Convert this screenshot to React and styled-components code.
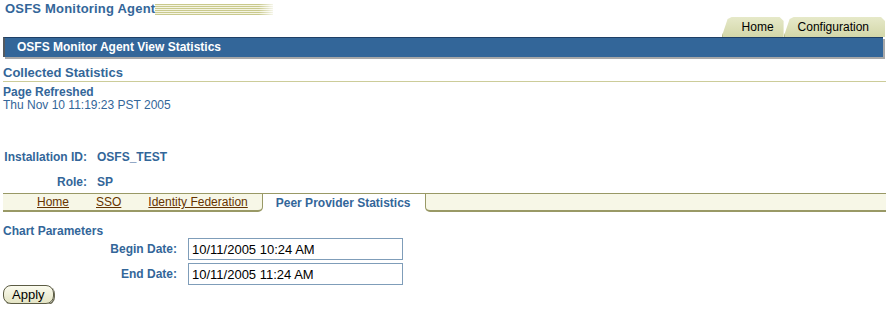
import * as React from "react";
import styled, { createGlobalStyle } from "styled-components";

const GlobalStyle = createGlobalStyle`
  body {
    margin: 0;
    background: #ffffff;
    font-family: "Liberation Sans", Arial, sans-serif;
    font-size: 12px;
  }
`;

const Page = styled.div`
  width: 886px;
  color: #336699;
`;

const Branding = styled.div`
  display: flex;
  align-items: flex-start;
  height: 17px;
  padding-left: 5px;
`;

const AppTitle = styled.h1`
  margin: 0;
  font-size: 13px;
  line-height: 17px;
  letter-spacing: 0.2px;
  font-weight: bold;
  color: #336699;
`;

const Stripes = styled.div`
  width: 118px;
  height: 11px;
  margin-top: 4px;
  background: repeating-linear-gradient(
    to bottom,
    #c9c98d 0,
    #c9c98d 1px,
    #f4f4e2 1px,
    #f4f4e2 2px
  );
  -webkit-mask-image: linear-gradient(to right, #000 88%, rgba(0, 0, 0, 0.2));
  mask-image: linear-gradient(to right, #000 88%, rgba(0, 0, 0, 0.2));
`;

const GlobalTabs = styled.div`
  display: flex;
  justify-content: flex-end;
  height: 20px;
  padding-right: 1px;
`;

const GlobalTab = styled.div`
  height: 20px;
  line-height: 21px;
  padding: 0 ${(p) => p.$pad}px 0 ${(p) => p.$padLeft}px;
  font-size: 12px;
  color: #000;
  background: linear-gradient(to bottom, #e6e9c9, #d3d7a9);
  clip-path: polygon(0 100%, 6px 2px, 10px 0, calc(100% - 4px) 0, 100% 4px, 100% 100%);
  box-shadow: inset 1px 0 0 #b5b98a;
`;

const TitleBar = styled.div`
  height: 19px;
  margin: 0 3px 0 3px;
  padding-left: 12px;
  background: #336699;
  border-top: 1px solid #1e3f66;
  border-left: 2px solid #555a60;
  box-shadow: 2px 2px 0 #a8a8a8;
  color: #fff;
  font-weight: bold;
  font-size: 12px;
  line-height: 19px;
`;

const SectionHeading = styled.h2`
  margin: 8px 0 0 3px;
  font-size: 13px;
  line-height: 16px;
  font-weight: bold;
  color: #336699;
  border-bottom: 1px solid #cccc99;
`;

const Refresh = styled.div`
  margin: 4px 0 0 3px;
  line-height: 13px;
`;

const RefreshLabel = styled.div`
  font-weight: bold;
`;

const InfoGrid = styled.div`
  display: grid;
  grid-template-columns: 87px auto;
  column-gap: 10px;
  row-gap: 11px;
  margin-top: 38px;
  line-height: 14px;
  font-weight: bold;
  justify-content: start;
`;

const InfoLabel = styled.div`
  text-align: right;
`;

const SubTabBar = styled.div`
  display: flex;
  margin: 4px 0 0 3px;
  height: 19px;
`;

const SubTabFill = styled.div`
  display: flex;
  gap: 27px;
  flex: ${(p) => (p.$grow ? 1 : "none")};
  padding: 0 ${(p) => p.$padRight}px 0 ${(p) => p.$padLeft}px;
  background: #f7f7e7;
  border-top: 1px solid #999966;
  border-bottom: 2px solid #999966;
  border-left: ${(p) => (p.$grow ? "1px solid #999966" : "none")};
  border-right: ${(p) => (p.$grow ? "none" : "1px solid #999966")};
  border-bottom-left-radius: ${(p) => (p.$grow ? "5px" : "0")};
  border-bottom-right-radius: ${(p) => (p.$grow ? "0" : "5px")};
  line-height: 17px;
`;

const SubTabLink = styled.a`
  color: #663300;
  text-decoration: underline;
  font-size: 12px;
`;

const ActiveSubTab = styled.div`
  padding: 0 14px 0 13px;
  background: #fff;
  border-top: 1px solid #999966;
  font-weight: bold;
  line-height: 18px;
`;

const ParamsHeading = styled.div`
  margin: 12px 0 0 3px;
  font-weight: bold;
  line-height: 14px;
`;

const FormGrid = styled.div`
  display: grid;
  grid-template-columns: 177px 215px;
  column-gap: 11px;
  row-gap: 3px;
  align-items: center;
`;

const FieldLabel = styled.label`
  text-align: right;
  font-weight: bold;
`;

const TextInput = styled.input`
  box-sizing: border-box;
  width: 215px;
  height: 22px;
  margin: 0;
  padding: 1px 3px 0;
  border: 1px solid #7f9db9;
  font-family: "Liberation Sans", Arial, sans-serif;
  font-size: 13px;
  color: #000;
  outline: none;
`;

const ApplyButton = styled.button`
  margin: 0 0 0 3px;
  height: 19px;
  padding: 0 8px;
  border: 1px solid #5c5c44;
  border-radius: 8px;
  background: linear-gradient(to bottom, #fbfbef, #e4e4c4);
  box-shadow: 1px 1px 0 #6b6b55;
  font-family: "Liberation Sans", Arial, sans-serif;
  font-size: 13px;
  line-height: 16px;
  color: #000;
`;

export default function App() {
  return (
    <Page>
      <GlobalStyle />
      <Branding>
        <AppTitle>OSFS Monitoring Agent</AppTitle>
        <Stripes />
      </Branding>
      <GlobalTabs>
        <GlobalTab $padLeft={20} $pad={10}>Home</GlobalTab>
        <GlobalTab $padLeft={14} $pad={16}>Configuration</GlobalTab>
      </GlobalTabs>
      <TitleBar>OSFS Monitor Agent View Statistics</TitleBar>
      <SectionHeading>Collected Statistics</SectionHeading>
      <Refresh>
        <RefreshLabel>Page Refreshed</RefreshLabel>
        <div>Thu Nov 10 11:19:23 PST 2005</div>
      </Refresh>
      <InfoGrid>
        <InfoLabel>Installation ID:</InfoLabel>
        <div>OSFS_TEST</div>
        <InfoLabel>Role:</InfoLabel>
        <div>SP</div>
      </InfoGrid>
      <SubTabBar>
        <SubTabFill $padLeft={34} $padRight={14}>
          <SubTabLink href="#">Home</SubTabLink>
          <SubTabLink href="#">SSO</SubTabLink>
          <SubTabLink href="#">Identity Federation</SubTabLink>
        </SubTabFill>
        <ActiveSubTab>Peer Provider Statistics</ActiveSubTab>
        <SubTabFill $grow />
      </SubTabBar>
      <ParamsHeading>Chart Parameters</ParamsHeading>
      <FormGrid>
        <FieldLabel>Begin Date:</FieldLabel>
        <TextInput defaultValue="10/11/2005 10:24 AM" />
        <FieldLabel>End Date:</FieldLabel>
        <TextInput defaultValue="10/11/2005 11:24 AM" />
      </FormGrid>
      <ApplyButton>Apply</ApplyButton>
    </Page>
  );
}
